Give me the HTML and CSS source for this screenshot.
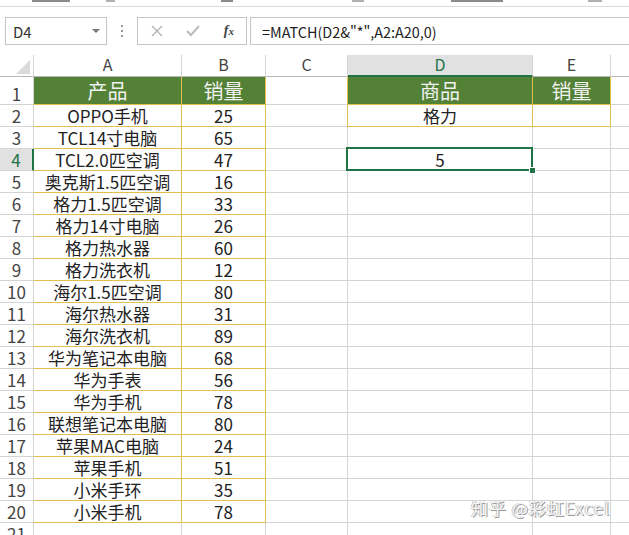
FILE: index.html
```html
<!DOCTYPE html>
<html lang="zh-CN">
<head>
    <meta charset="UTF-8">
    <title>MATCH 通配符查找</title>
    <link rel="stylesheet" href="styles.css">
</head>
<body>
    <!-- bottom edge of the ribbon, mostly scrolled away -->
    <div class="ribbon-edge">
        <span class="frag frag-1"></span>
        <span class="frag frag-2"></span>
        <span class="frag frag-3"></span>
        <span class="frag frag-4"></span>
        <span class="frag frag-5"></span>
        <span class="frag frag-6"></span>
    </div>

    <div class="formula-row">
        <div class="name-box">
            <span>D4</span>
            <span class="drop-arrow"></span>
        </div>
        <div class="grip">
            <svg width="3" height="12" viewBox="0 0 3 12">
                <rect x="0" y="0" width="2" height="2" fill="#9a9a9a"/>
                <rect x="0" y="5" width="2" height="2" fill="#9a9a9a"/>
                <rect x="0" y="10" width="2" height="2" fill="#9a9a9a"/>
            </svg>
        </div>
        <div class="fx-box">
            <svg class="fx-icon" width="12" height="12" viewBox="0 0 12 12">
                <path d="M1 1 L11 11 M11 1 L1 11" stroke="#b4b4b4" stroke-width="1.4" fill="none"/>
            </svg>
            <svg class="fx-icon" width="14" height="12" viewBox="0 0 14 12">
                <path d="M1 6 L5 10 L13 1" stroke="#bcbcbc" stroke-width="2" fill="none"/>
            </svg>
            <span class="fx-text">f<span class="fx-x">x</span></span>
        </div>
        <div class="formula-input">=MATCH(D2&amp;"*",A2:A20,0)</div>
    </div>

    <div class="sheet" id="sheet">
        <div class="hdr corner">
            <svg width="14" height="14" viewBox="0 0 14 14">
                <path d="M14 0 L14 14 L0 14 Z" fill="#dadada"/>
            </svg>
        </div>
        <div class="hdr col">A</div>
        <div class="hdr col">B</div>
        <div class="hdr col">C</div>
        <div class="hdr col col-active">D</div>
        <div class="hdr col">E</div>
        <div class="hdr col"></div>
    </div>

    <div class="watermark">知乎 @彩虹Excel</div>

    <script>
        const rows = [
            ['OPPO手机', 25], ['TCL14寸电脑', 65], ['TCL2.0匹空调', 47],
            ['奥克斯1.5匹空调', 16], ['格力1.5匹空调', 33], ['格力14寸电脑', 26],
            ['格力热水器', 60], ['格力洗衣机', 12], ['海尔1.5匹空调', 80],
            ['海尔热水器', 31], ['海尔洗衣机', 89], ['华为笔记本电脑', 68],
            ['华为手表', 56], ['华为手机', 78], ['联想笔记本电脑', 80],
            ['苹果MAC电脑', 24], ['苹果手机', 51], ['小米手环', 35], ['小米手机', 78]
        ];

        const sheet = document.getElementById('sheet');

        function cell(text, cls) {
            const div = document.createElement('div');
            div.className = 'cell ' + (cls || '');
            div.textContent = text;
            sheet.appendChild(div);
        }

        // row 1: table headers
        cell('1', 'hdr row');
        cell('产品', 'title tbl');
        cell('销量', 'title tbl');
        cell('', 'edge');
        cell('商品', 'title tbl');
        cell('销量', 'title tbl');
        cell('', '');

        for (let r = 2; r <= 21; r++) {
            const item = rows[r - 2];
            cell(String(r), 'hdr row' + (r === 4 ? ' row-active' : ''));
            cell(item ? item[0] : '', item ? 'tbl' : '');
            cell(item ? item[1] : '', item ? 'tbl' : '');
            cell('', r === 2 ? 'edge' : '');
            if (r === 2) {
                cell('格力', 'tbl');
                cell('', 'tbl');
            } else if (r === 4) {
                cell('5', 'selected');
                cell('', '');
            } else {
                cell('', '');
                cell('', '');
            }
            cell('', '');
        }
    </script>
</body>
</html>
```

FILE: styles.css
```css
body {
    margin: 0;
    width: 629px;
    height: 535px;
    overflow: hidden;
    position: relative;
    background: #fff;
    font-family: "Noto Sans CJK SC", "Noto Sans", sans-serif;
    color: #222;
}
.ribbon-edge {
    height: 6px;
    border-bottom: 1px solid #dcdcdc;
    display: flex;
}
.frag {
    height: 2px;
    background: #8a8a8a;
}
.frag-1 { margin-left: 32px; width: 38px; }
.frag-2 { margin-left: 36px; width: 9px; background: #b0b0b0; }
.frag-3 { margin-left: 106px; width: 12px; }
.frag-4 { margin-left: 119px; width: 12px; background: #b0b0b0; }
.frag-5 { margin-left: 87px; width: 52px; }
.frag-6 { margin-left: 85px; width: 14px; background: #b0b0b0; }

.formula-row {
    display: flex;
    height: 28px;
    margin-top: 10px;
    margin-bottom: 10px;
}
.name-box {
    box-sizing: border-box;
    width: 102px;
    margin-left: 5px;
    border: 1px solid #c6c6c6;
    display: flex;
    align-items: center;
    justify-content: space-between;
    padding: 0 6px 0 7px;
    font-size: 15px;
    color: #333;
}
.drop-arrow {
    width: 0;
    height: 0;
    border-left: 4px solid transparent;
    border-right: 4px solid transparent;
    border-top: 4px solid #777;
}
.grip {
    width: 30px;
    display: flex;
    align-items: center;
    justify-content: center;
}
.fx-box {
    box-sizing: border-box;
    width: 110px;
    border: 1px solid #c6c6c6;
    display: flex;
    align-items: center;
    padding: 0 12px 0 13px;
    justify-content: space-between;
}
.fx-text {
    font-family: "Liberation Serif", serif;
    font-style: italic;
    font-weight: bold;
    font-size: 14px;
    color: #444;
}
.fx-x {
    font-size: 11px;
}
.formula-input {
    flex: 1;
    margin-left: 3px;
    margin-right: -5px;
    border: 1px solid #c6c6c6;
    display: flex;
    align-items: center;
    padding-left: 11px;
    font-size: 14.4px;
    color: #222;
}

.sheet {
    display: grid;
    grid-template-columns: 34px 148px 84px 82px 185px 78px 40px;
    grid-template-rows: 22px 28px;
    grid-auto-rows: 22px;
}
.cell, .hdr {
    box-sizing: border-box;
    border-right: 1px solid #d4d4d4;
    border-bottom: 1px solid #d4d4d4;
    display: flex;
    align-items: center;
    justify-content: center;
    font-size: 17px;
    line-height: 1;
    white-space: nowrap;
}
.hdr {
    color: #444;
}
.col {
    font-size: 16px;
    align-items: flex-end;
    padding-bottom: 4px;
    border-bottom-color: #b8b8b8;
}
.corner {
    border-bottom-color: #b8b8b8;
    align-items: flex-end;
    justify-content: flex-end;
    padding: 0 3px 2px 0;
}
.col-active {
    background: #e1e1e1;
    color: #217346;
    border-bottom: 2px solid #217346;
    padding-bottom: 3px;
}
.row {
    align-items: flex-end;
    padding-bottom: 2px;
}
.row-active {
    background: #e1e1e1;
    color: #217346;
    border-right: 2px solid #217346;
}
.tbl {
    border-right-color: #e3c04c;
    border-bottom-color: #e3c04c;
}
.edge {
    border-right-color: #e3c04c;
}
.title {
    background: #538135;
    color: #f2f2f2;
    font-size: 20px;
    align-items: flex-end;
    padding-bottom: 3px;
}
.selected {
    position: relative;
}
.selected::after {
    content: "";
    position: absolute;
    top: -2px;
    left: -2px;
    right: -1px;
    bottom: -1px;
    border: 2px solid #217346;
}
.selected::before {
    content: "";
    position: absolute;
    right: -4px;
    bottom: -4px;
    width: 5px;
    height: 5px;
    background: #217346;
    border: 1px solid #fff;
    z-index: 1;
}
.watermark {
    position: absolute;
    left: 471px;
    top: 498px;
    font-size: 17px;
    line-height: 20px;
    letter-spacing: 1px;
    color: #f4f4f4;
    text-shadow: 1px 1px 0 #9a9a9a, -1px 0 0 #c8c8c8;
}
```
